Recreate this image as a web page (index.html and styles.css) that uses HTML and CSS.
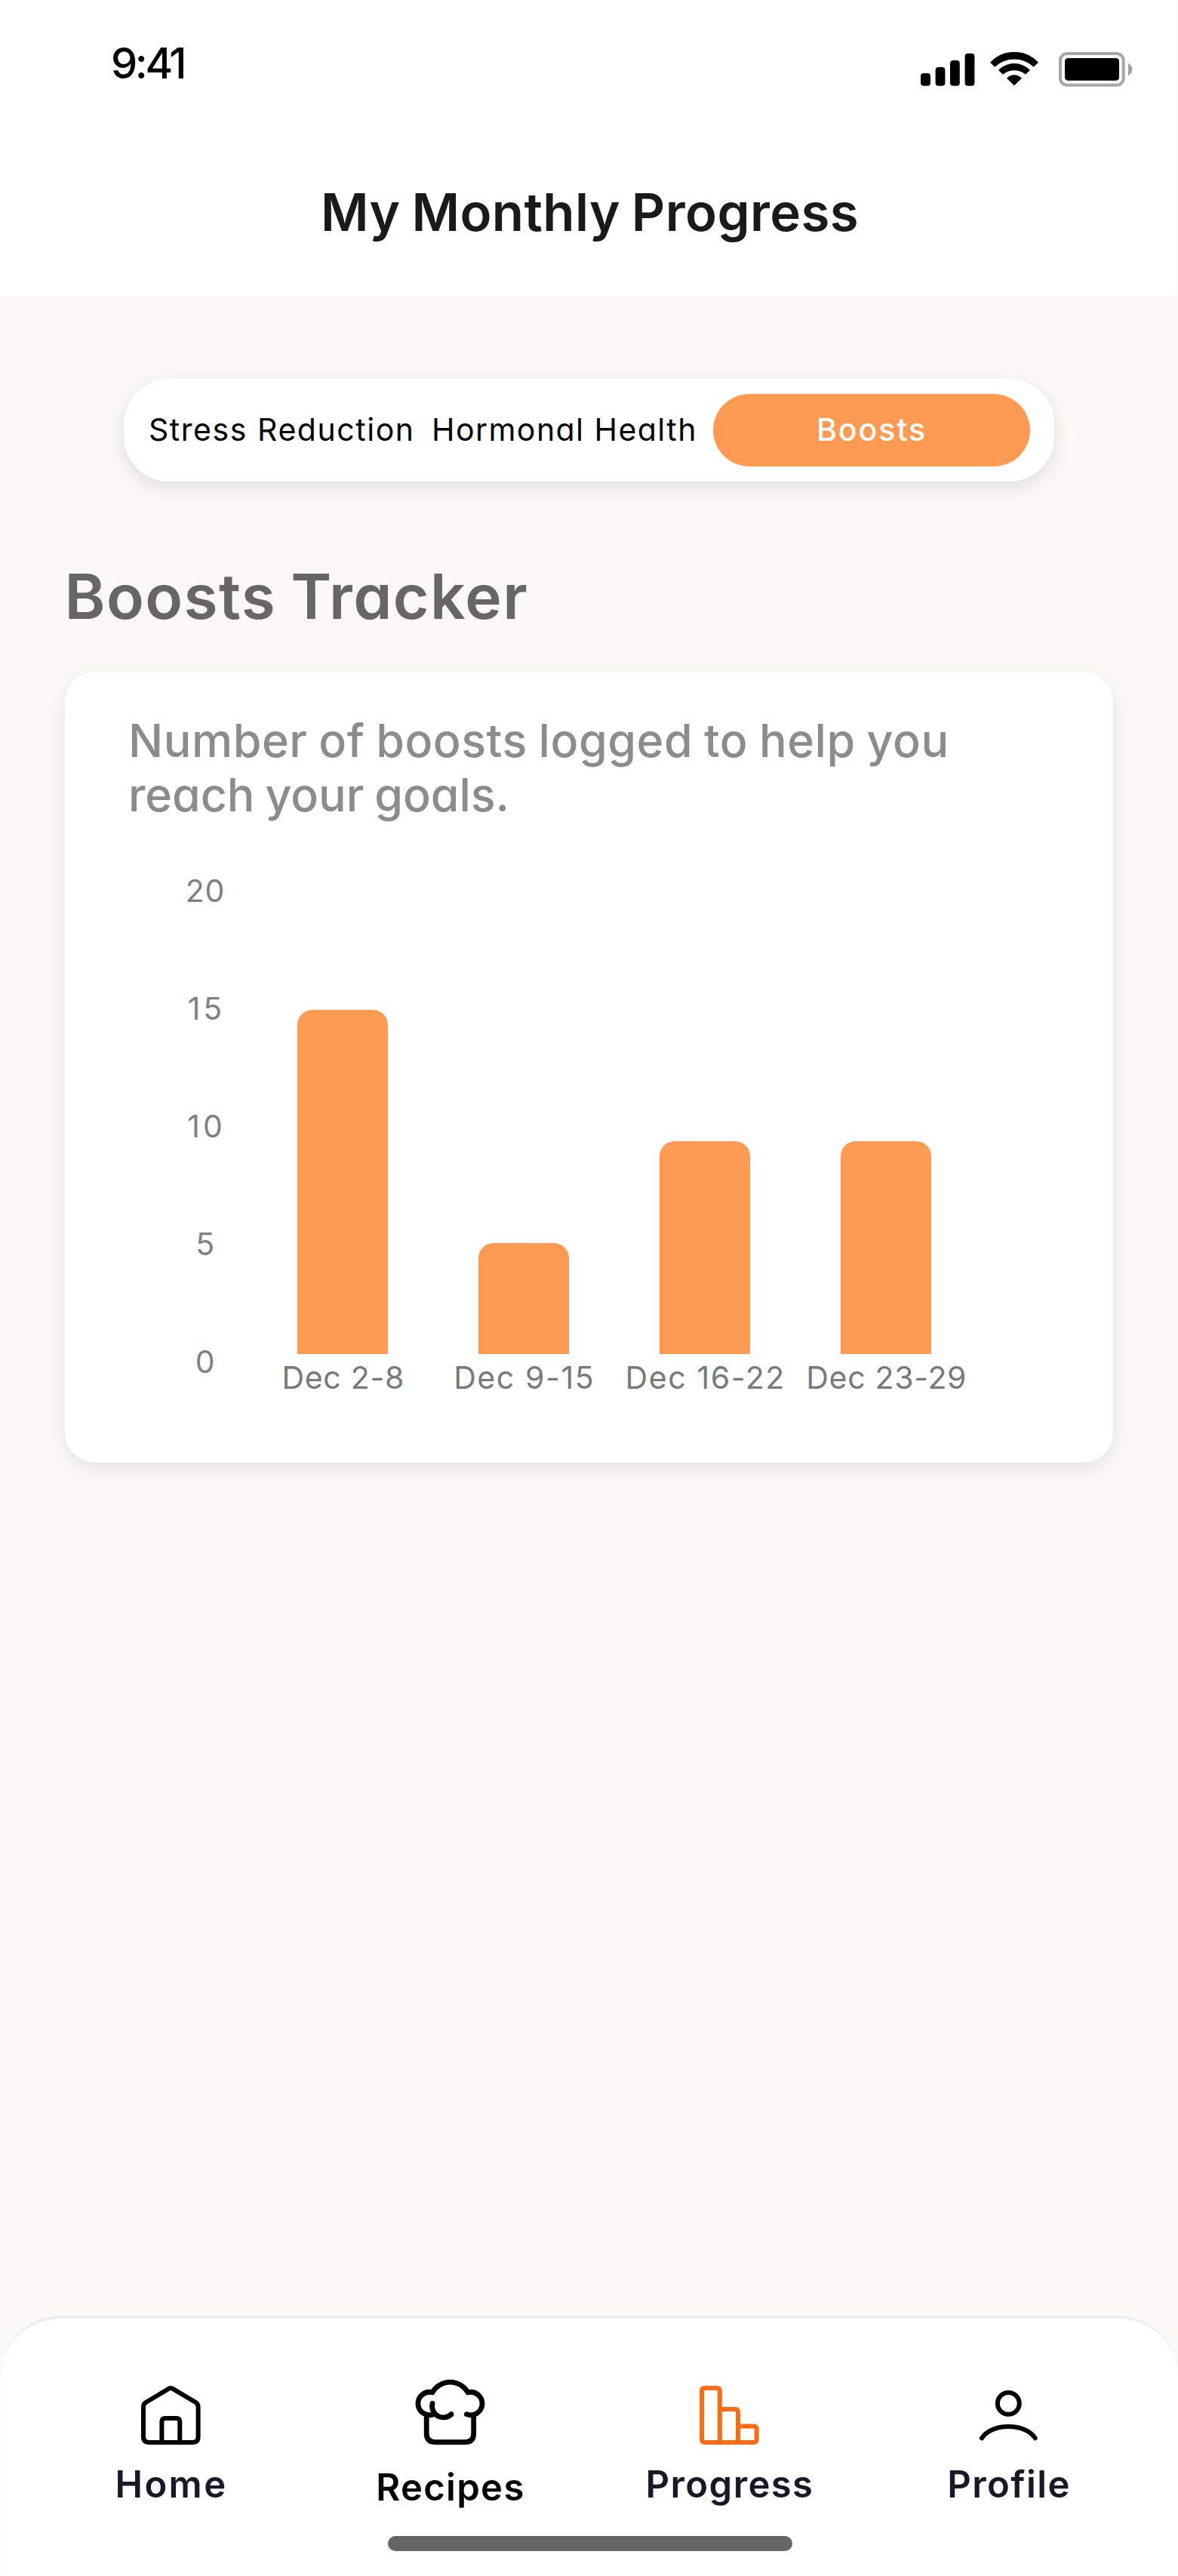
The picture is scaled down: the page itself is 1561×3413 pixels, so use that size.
FILE: index.html
```html
<!DOCTYPE html>
<html lang="en">
<head>
<meta charset="utf-8">
<title>My Monthly Progress</title>
<link rel="stylesheet" href="styles.css">
</head>
<body>
<header class="header">
  <div class="status">
    <span class="time">9:41</span>
    <svg class="status-icons" width="282" height="46" viewBox="0 0 282 46">
      <rect x="0" y="28" width="13" height="16.7" rx="4"/>
      <rect x="19.6" y="20" width="12.8" height="24.7" rx="4"/>
      <rect x="39" y="11" width="12.8" height="33.7" rx="4"/>
      <rect x="58.6" y="1.7" width="12.8" height="43" rx="4"/>
      <g stroke="#000" stroke-width="1.6" stroke-linejoin="round">
        <path d="M93.1 13.7A43 43 0 0 1 154.9 13.7L149.6 18.6A38 38 0 0 0 98.4 18.6Z"/>
        <path d="M104.1 24A28 28 0 0 1 143.9 24L138.8 28.6A24 24 0 0 0 109.2 28.6Z"/>
        <path d="M115.2 34.6A12.6 12.6 0 0 1 132.8 34.6L124 43.2Z"/>
      </g>
      <rect x="185" y="2" width="83.7" height="41.7" rx="9" fill="none" stroke="#a6a6a6" stroke-width="4"/>
      <rect x="191" y="8" width="72" height="29.7" rx="4.5"/>
      <path d="M275 15C278.6 16.5 280.4 19.5 280.4 23S278.6 29.5 275 31Z" fill="#a0a0a0"/>
    </svg>
  </div>
  <h1 class="title">My Monthly Progress</h1>
</header>

<main class="main">
  <nav class="tabs">
    <span class="tab tab-stress">Stress Reduction</span>
    <span class="tab tab-hormonal">Hormonal Health</span>
    <span class="tab tab-active">Boosts</span>
  </nav>
  <h2 class="heading">Boosts Tracker</h2>
  <section class="card">
    <p class="summary">Number of boosts logged to help you<br><span class="summary-end">reach your goals.</span></p>
    <div class="chart">
      <div class="axis"><span>20</span><span class="teen">15</span><span class="teen">10</span><span>5</span><span>0</span></div>
      <div class="plot">
        <div class="col"><div class="bar" style="height:456px"></div><span class="week">Dec 2-8</span></div>
        <div class="col"><div class="bar" style="height:146.5px"></div><span class="week week-wide">Dec 9-15</span></div>
        <div class="col"><div class="bar" style="height:282px"></div><span class="week week-wide">Dec 16-22</span></div>
        <div class="col"><div class="bar" style="height:282px"></div><span class="week">Dec 23-29</span></div>
      </div>
    </div>
  </section>
</main>

<footer class="footer">
  <nav class="menu">
    <a class="item item-home">
      <svg class="icon" viewBox="0 0 100 100"><path d="M21 86H78Q85.6 86 85.6 78.5V39Q85.6 35 82.4 33L51.5 14.7Q49.3 13.4 47 14.7L16.2 33Q13 35 13 39V78.5Q13 86 21 86ZM37.4 86V58.5Q37.4 54 42 54H56.7Q61.3 54 61.3 58.5V86"/></svg>
      <span>Home</span>
    </a>
    <a class="item item-recipes">
      <svg class="icon icon-hat" viewBox="0 0 100 100"><path d="M25.9 19.8A27.2 27.2 0 0 1 73 19.8M26 19.8A15.2 15.2 0 1 0 28 48.5M73 19.8A15.2 15.2 0 1 1 71.3 48.7M26 34.3A15 15 0 0 0 51 48.7M18.2 50V74Q18.2 85.7 30 85.7H69Q80.7 85.7 80.7 74V50"/></svg>
      <span>Recipes</span>
    </a>
    <a class="item item-progress">
      <svg class="icon icon-current" viewBox="0 0 100 100"><path d="M17 14H33Q36.8 14 36.8 18V86H17Q13 86 13 82V18Q13 14 17 14ZM36.8 42H57Q61 42 61 46V86H36.8M61 64.6H81.6Q85.6 64.6 85.6 68.6V82Q85.6 86 81.6 86H61"/></svg>
      <span>Progress</span>
    </a>
    <a class="item item-profile">
      <svg class="icon" viewBox="0 0 100 100"><circle cx="49.3" cy="34.4" r="14.4"/><path d="M14 80.3C20 71 33 65 49.3 65S79 71 84.7 80.3"/></svg>
      <span>Profile</span>
    </a>
  </nav>
  <div class="home-indicator"></div>
</footer>
</body>
</html>
```
FILE: styles.css
```css
* { box-sizing: border-box; margin: 0; padding: 0; }

body {
  display: flex;
  flex-direction: column;
  width: 1561px;
  height: 3413px;
  background: #faf9f5;
  font-family: Inter, "Liberation Sans", sans-serif;
  font-feature-settings: "cv11";
  white-space: nowrap;
}

.header { width: 1559px; height: 392px; background: #fff; }
.status {
  display: flex;
  justify-content: space-between;
  align-items: flex-start;
  height: 240px;
  padding: 50px 57px 0 147px;
}
.time { font-size: 56px; font-weight: 500; line-height: 69px; letter-spacing: -3.4px; }
.status-icons { margin-top: 19px; }
.title {
  color: #1a1a1a;
  font-size: 69px;
  font-weight: 600;
  line-height: 82px;
  letter-spacing: 0.4px;
  word-spacing: -3px;
  padding-left: 425px;
}

.main { flex: 1; border-left: 1.5px solid #fff; padding: 110px 86px 0 84.5px; }
.tabs {
  display: flex;
  align-items: center;
  width: 1233px;
  height: 136px;
  margin-left: 78.5px;
  padding: 0 32px 0 33px;
  border-radius: 60px;
  background: #fff;
  box-shadow: 0 8px 24px rgba(0, 0, 0, 0.11);
}
.tab { font-size: 41px; line-height: 96px; padding-bottom: 2px; letter-spacing: 1.55px; }
.tab-stress { width: 375px; }
.tab-hormonal { flex: 1; letter-spacing: 1.45px; }
.tab-active {
  width: 420px;
  height: 96px;
  border-radius: 48px;
  background: #ff9a52;
  color: #fff;
  font-weight: 500;
  line-height: 95px;
  letter-spacing: 2px;
  text-align: center;
}

.heading {
  margin-top: 103px;
  color: #666663;
  font-size: 82px;
  font-weight: 640;
  line-height: 100px;
  letter-spacing: 1.4px;
  word-spacing: -3px;
}

.card {
  height: 1048px;
  margin-top: 49px;
  padding: 55px 0 0 84.5px;
  border-radius: 40px;
  background: #fff;
  box-shadow: 0 8px 24px rgba(0, 0, 0, 0.09);
}
.summary {
  color: #8c8c8c;
  font-size: 61px;
  font-weight: 500;
  line-height: 72.4px;
  letter-spacing: 0.55px;
  word-spacing: -2px;
}
.summary-end { letter-spacing: -0.1px; }

.chart { display: flex; margin-top: 12px; font-size: 41px; }
.axis {
  display: flex;
  flex-direction: column;
  width: 100px;
  margin-left: 52px;
  color: #808080;
  line-height: 156px;
  letter-spacing: 0.8px;
  text-align: center;
}
.teen { padding-left: 3px; letter-spacing: 4px; }
.plot { display: flex; height: 754px; margin-left: 12px; }
.col { display: flex; flex-direction: column; justify-content: flex-end; align-items: center; width: 240px; }
.bar { width: 120px; border-radius: 20px 20px 0 0; background: #ff9a52; }
.week { padding-left: 1.5px; color: #757b7b; line-height: 62px; letter-spacing: 0.7px; }
.week-wide { letter-spacing: 1.6px; }

.footer {
  display: flex;
  flex-direction: column;
  height: 345px;
  margin-left: 1px;
  padding: 78px 38px 33px 41px;
  border-top: 4px solid #eeeeef;
  border-radius: 80px 80px 0 0;
  background: #fff;
}
.menu { display: grid; grid-template-columns: repeat(4, 370px); }
.item {
  display: flex;
  flex-direction: column;
  align-items: center;
  gap: 12px;
  color: #1a1828;
  font-size: 49px;
  font-weight: 560;
  line-height: 60px;
  letter-spacing: 1.4px;
}
.item-home { letter-spacing: 2.4px; }
.item-recipes { gap: 16px; color: #000; letter-spacing: 1.3px; }
.icon {
  width: 100px;
  height: 100px;
  fill: none;
  stroke: #000;
  stroke-width: 6;
  stroke-linecap: round;
  stroke-linejoin: round;
}
.icon-hat { stroke-width: 6.8; }
.icon-current { stroke: #ff6b12; }
.home-indicator {
  width: 536px;
  height: 20px;
  margin: auto 0 0 472px;
  border-radius: 10px;
  background: #666;
}
```
